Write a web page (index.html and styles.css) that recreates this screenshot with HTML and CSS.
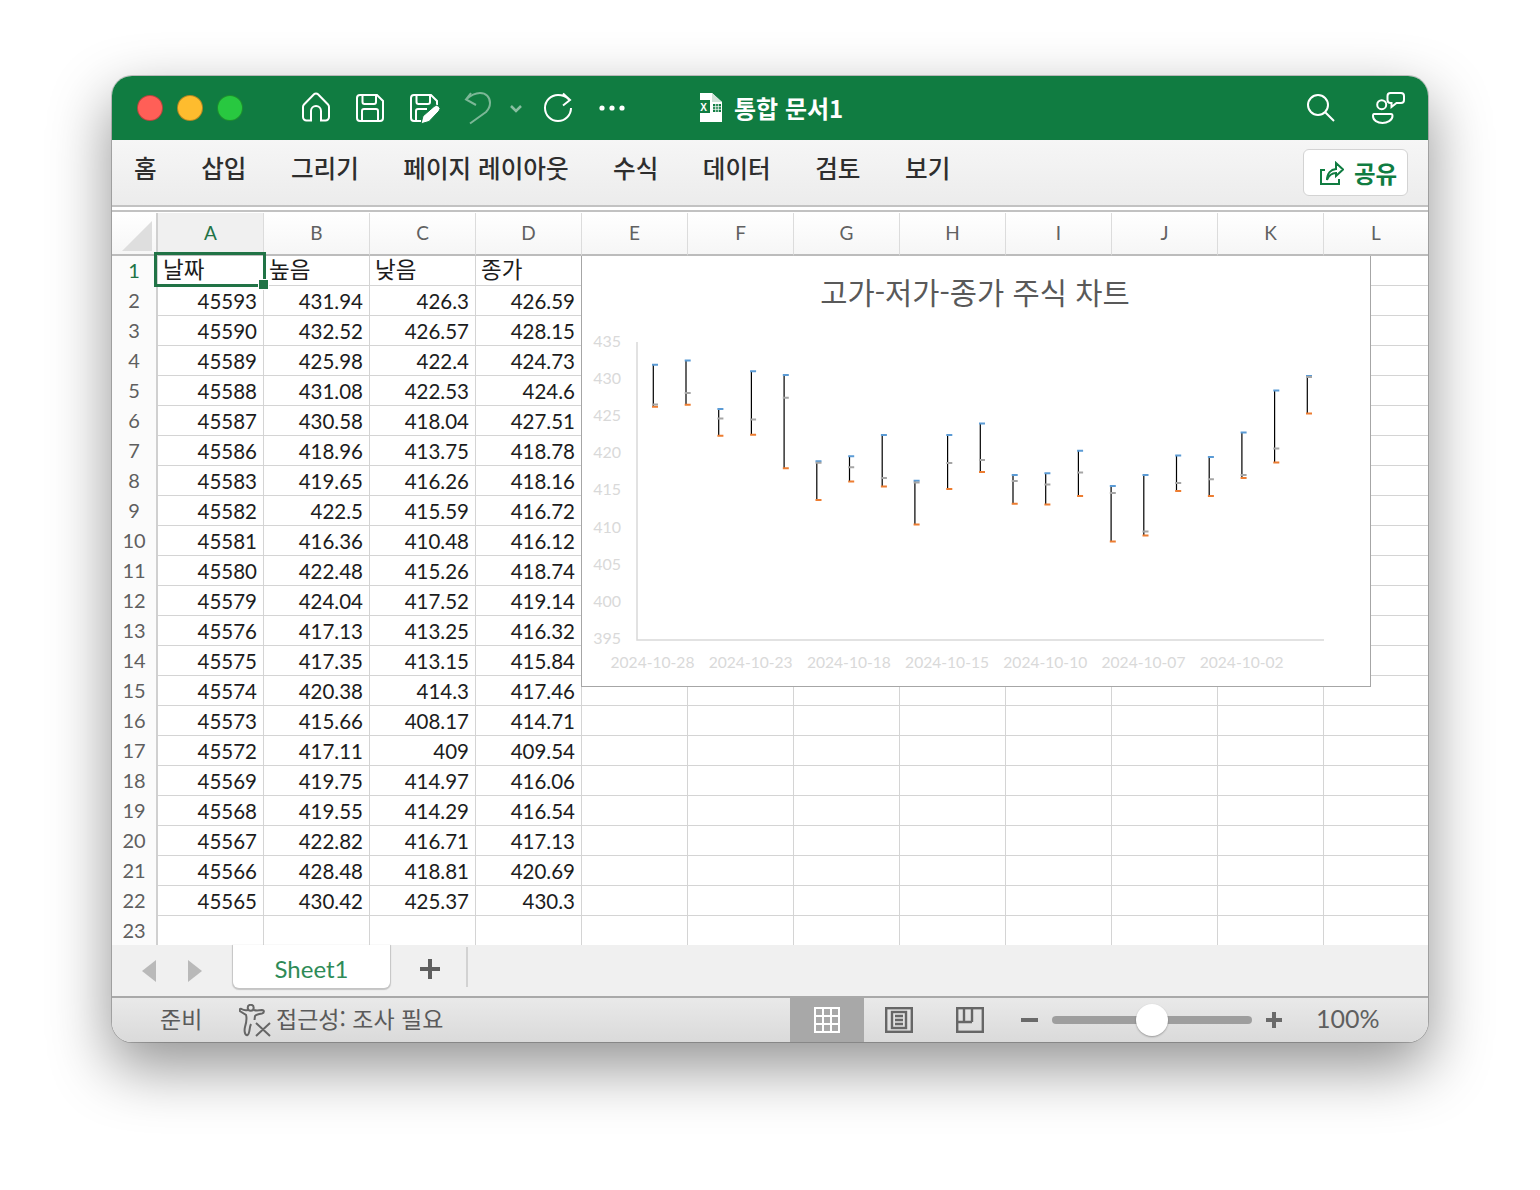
FILE: index.html
```html
<!DOCTYPE html>
<html lang="ko">
<head>
<meta charset="utf-8">
<title>통합 문서1</title>
<link rel="stylesheet" href="styles.css">
</head>
<body>
<main class="window">
  <header class="titlebar">
    <div class="lights"><span class="light red"></span><span class="light yellow"></span><span class="light green"></span></div>
    <div class="quick">
      <svg class="qi home" viewBox="0 0 28 30"><path d="M12 2.300 a2.800 2.800 0 0 1 4 0 L26 12.500 a3.500 3.500 0 0 1 1 2.500 V25 a3.500 3.500 0 0 1 -3.500 3.500 H19 V19 a5 5 0 0 0 -10 0 V28.500 H4.500 a3.500 3.500 0 0 1 -3.500 -3.500 V15 a3.500 3.500 0 0 1 1 -2.500 Z"/></svg>
      <svg class="qi save" viewBox="0 0 28 28"><path d="M4 1 H21 L27 7 V24 a3 3 0 0 1 -3 3 H4 a3 3 0 0 1 -3 -3 V4 a3 3 0 0 1 3 -3 Z M6.500 1 V8 a2 2 0 0 0 2 2 H18 a2 2 0 0 0 2 -2 V1 M6 27 V17 a2 2 0 0 1 2 -2 H20 a2 2 0 0 1 2 2 V27"/></svg>
      <svg class="qi saveas" viewBox="0 0 30 30"><path d="M11 27 H4 a3 3 0 0 1 -3 -3 V4 a3 3 0 0 1 3 -3 H21 L27 7 V11 M6.500 1 V8 a2 2 0 0 0 2 2 H18 a2 2 0 0 0 2 -2 V1 M6 27 V17 a2 2 0 0 1 2 -2 H17"/><path class="solid" d="M11 29.800 L13 22 L24 12.500 a3.300 3.300 0 0 1 5 4.500 L19 27.500 Z"/></svg>
      <svg class="qi undo" viewBox="0 0 26 32"><path d="M6 1 L1 7.500 L11 13 M1 7.500 C6 3 11 1 15 1 C21 1 25 5 25 11 C25 15 23 18 21 20 L5 31.500"/></svg>
      <svg class="qi chevron" viewBox="0 0 12 7"><path d="M1 1 L6 6 L11 1"/></svg>
      <svg class="qi redo" viewBox="0 0 30 30"><path d="M19 1.500 L26 8 L19 13.500 M25 7.500 C22 4.500 18 3 14 3 A13 13 0 1 0 27 16"/></svg>
      <svg class="qi dots" viewBox="0 0 26 6"><circle cx="3" cy="3" r="2.600"/><circle cx="13" cy="3" r="2.600"/><circle cx="23" cy="3" r="2.600"/></svg>
    </div>
    <div class="doc">
      <svg class="docicon" viewBox="0 0 25 30"><path class="docfill" d="M3 0 H15 L25 9 V29 H3 Z"/><path class="docfold" d="M15 0 L25 9 H15 Z"/><rect class="docbox" x="0" y="7" width="13" height="13"/><text class="docx" x="6.500" y="17.500">X</text><path class="docgrid" d="M16 11 H24 V19 H16 Z"/><path class="docgridline" d="M16 13.700 H24 M16 16.300 H24 M18.700 11 V19 M21.300 11 V19"/></svg>
      <span class="docname">통합 문서1</span>
    </div>
    <div class="right">
      <svg class="ri search" viewBox="0 0 28 28"><circle cx="11" cy="11" r="10"/><path d="M18.200 18.200 L27 27"/></svg>
      <svg class="ri people" viewBox="0 0 33 32"><circle cx="9.700" cy="12.700" r="4.500"/><path d="M2 22 H19 C20 22 20.500 22.500 20.500 24 C20.500 28.500 15 31 10.500 31 C5.500 31 1 28.500 1 24 C1 22.500 1 22 2 22 Z"/><path d="M18.500 1 H29 a3 3 0 0 1 3 3 V8 a3 3 0 0 1 -3 3 H24.500 L19.500 15 V11 H18.500 a3 3 0 0 1 -3 -3 V4 a3 3 0 0 1 3 -3 Z"/></svg>
    </div>
  </header>

  <nav class="ribbon">
    <span class="tab">홈</span><span class="tab">삽입</span><span class="tab">그리기</span><span class="tab">페이지 레이아웃</span><span class="tab">수식</span><span class="tab">데이터</span><span class="tab">검토</span><span class="tab">보기</span>
    <button class="share" type="button">
      <svg class="shareicon" viewBox="0 0 24 24"><path d="M5 9 H1 V23 H19 V18 M7 19 C7 12 11 8.500 16 8 V2 L23 8.500 L16 15 V12 C12 12 9 14 7 19 Z"/></svg>
      <span>공유</span>
    </button>
  </nav>

  <section class="sheet">
    <table class="grid">
      <thead>
        <tr><th class="corner"><span class="tri"></span></th><th class="col on">A</th><th class="col">B</th><th class="col">C</th><th class="col">D</th><th class="col">E</th><th class="col">F</th><th class="col">G</th><th class="col">H</th><th class="col">I</th><th class="col">J</th><th class="col">K</th><th class="col last">L</th></tr>
      </thead>
      <tbody>
        <tr><th class="on">1</th><td class="ko">날짜</td><td class="ko">높음</td><td class="ko">낮음</td><td class="ko">종가</td><td></td><td></td><td></td><td></td><td></td><td></td><td></td><td></td></tr>
        <tr><th>2</th><td>45593</td><td>431.94</td><td>426.3</td><td>426.59</td><td></td><td></td><td></td><td></td><td></td><td></td><td></td><td></td></tr>
        <tr><th>3</th><td>45590</td><td>432.52</td><td>426.57</td><td>428.15</td><td></td><td></td><td></td><td></td><td></td><td></td><td></td><td></td></tr>
        <tr><th>4</th><td>45589</td><td>425.98</td><td>422.4</td><td>424.73</td><td></td><td></td><td></td><td></td><td></td><td></td><td></td><td></td></tr>
        <tr><th>5</th><td>45588</td><td>431.08</td><td>422.53</td><td>424.6</td><td></td><td></td><td></td><td></td><td></td><td></td><td></td><td></td></tr>
        <tr><th>6</th><td>45587</td><td>430.58</td><td>418.04</td><td>427.51</td><td></td><td></td><td></td><td></td><td></td><td></td><td></td><td></td></tr>
        <tr><th>7</th><td>45586</td><td>418.96</td><td>413.75</td><td>418.78</td><td></td><td></td><td></td><td></td><td></td><td></td><td></td><td></td></tr>
        <tr><th>8</th><td>45583</td><td>419.65</td><td>416.26</td><td>418.16</td><td></td><td></td><td></td><td></td><td></td><td></td><td></td><td></td></tr>
        <tr><th>9</th><td>45582</td><td>422.5</td><td>415.59</td><td>416.72</td><td></td><td></td><td></td><td></td><td></td><td></td><td></td><td></td></tr>
        <tr><th>10</th><td>45581</td><td>416.36</td><td>410.48</td><td>416.12</td><td></td><td></td><td></td><td></td><td></td><td></td><td></td><td></td></tr>
        <tr><th>11</th><td>45580</td><td>422.48</td><td>415.26</td><td>418.74</td><td></td><td></td><td></td><td></td><td></td><td></td><td></td><td></td></tr>
        <tr><th>12</th><td>45579</td><td>424.04</td><td>417.52</td><td>419.14</td><td></td><td></td><td></td><td></td><td></td><td></td><td></td><td></td></tr>
        <tr><th>13</th><td>45576</td><td>417.13</td><td>413.25</td><td>416.32</td><td></td><td></td><td></td><td></td><td></td><td></td><td></td><td></td></tr>
        <tr><th>14</th><td>45575</td><td>417.35</td><td>413.15</td><td>415.84</td><td></td><td></td><td></td><td></td><td></td><td></td><td></td><td></td></tr>
        <tr><th>15</th><td>45574</td><td>420.38</td><td>414.3</td><td>417.46</td><td></td><td></td><td></td><td></td><td></td><td></td><td></td><td></td></tr>
        <tr><th>16</th><td>45573</td><td>415.66</td><td>408.17</td><td>414.71</td><td></td><td></td><td></td><td></td><td></td><td></td><td></td><td></td></tr>
        <tr><th>17</th><td>45572</td><td>417.11</td><td>409</td><td>409.54</td><td></td><td></td><td></td><td></td><td></td><td></td><td></td><td></td></tr>
        <tr><th>18</th><td>45569</td><td>419.75</td><td>414.97</td><td>416.06</td><td></td><td></td><td></td><td></td><td></td><td></td><td></td><td></td></tr>
        <tr><th>19</th><td>45568</td><td>419.55</td><td>414.29</td><td>416.54</td><td></td><td></td><td></td><td></td><td></td><td></td><td></td><td></td></tr>
        <tr><th>20</th><td>45567</td><td>422.82</td><td>416.71</td><td>417.13</td><td></td><td></td><td></td><td></td><td></td><td></td><td></td><td></td></tr>
        <tr><th>21</th><td>45566</td><td>428.48</td><td>418.81</td><td>420.69</td><td></td><td></td><td></td><td></td><td></td><td></td><td></td><td></td></tr>
        <tr><th>22</th><td>45565</td><td>430.42</td><td>425.37</td><td>430.3</td><td></td><td></td><td></td><td></td><td></td><td></td><td></td><td></td></tr>
        <tr><th>23</th><td></td><td></td><td></td><td></td><td></td><td></td><td></td><td></td><td></td><td></td><td></td><td></td></tr>
      </tbody>
    </table>
    <div class="selection"><span class="handle"></span></div>
    <figure class="chart">
      <svg class="chartsvg" viewBox="1 1 788 430">
        <text class="ctitle" x="394" y="49">고가-저가-종가 주식 차트</text>
        <g class="ylab">
          <text x="40" y="92">435</text><text x="40" y="129">430</text><text x="40" y="166">425</text><text x="40" y="203">420</text><text x="40" y="240">415</text><text x="40" y="278">410</text><text x="40" y="315">405</text><text x="40" y="352">400</text><text x="40" y="389">395</text>
        </g>
        <path class="axis" d="M56 87 V385 H743"/>
        <g class="xlab">
          <text x="71.500" y="413">2024-10-28</text><text x="169.700" y="413">2024-10-23</text><text x="267.900" y="413">2024-10-18</text><text x="366.100" y="413">2024-10-15</text><text x="464.300" y="413">2024-10-10</text><text x="562.500" y="413">2024-10-07</text><text x="660.700" y="413">2024-10-02</text>
        </g>
        <path class="hl" d="M72.300 109.800V151.700M105 105.500V149.700M137.700 154.100V180.700M170.400 116.200V179.800M203.100 119.900V213.200M235.800 206.300V245.100M268.500 201.200V226.400M301.200 180V231.400M333.900 225.700V269.400M366.600 180.100V233.900M399.300 168.500V217.100M432 220V248.800M464.700 218.300V249.600M497.400 195.800V241M530.100 230.900V286.600M562.800 220.100V280.400M595.500 200.500V236M628.200 201.900V241.100M660.900 177.600V223.100M693.600 135.500V207.500M726.300 121.100V158.600"/>
        <path class="high" d="M71 109.800h6M103.700 105.500h6M136.400 154.100h6M169.100 116.200h6M201.800 119.900h6M234.500 206.300h6M267.200 201.200h6M299.900 180h6M332.600 225.700h6M365.300 180.100h6M398 168.500h6M430.700 220h6M463.400 218.300h6M496.100 195.800h6M528.800 230.900h6M561.500 220.100h6M594.200 200.500h6M626.900 201.900h6M659.600 177.600h6M692.300 135.500h6M725 121.100h6"/>
        <path class="low" d="M71 151.700h6M103.700 149.700h6M136.400 180.700h6M169.100 179.800h6M201.800 213.200h6M234.500 245.100h6M267.200 226.400h6M299.900 231.400h6M332.600 269.400h6M365.300 233.900h6M398 217.100h6M430.700 248.800h6M463.400 249.600h6M496.100 241h6M528.800 286.600h6M561.500 280.400h6M594.200 236h6M626.900 241.100h6M659.600 223.100h6M692.300 207.500h6M725 158.600h6"/>
        <path class="close" d="M71 149.600h6M103.700 138h6M136.400 163.400h6M169.100 164.400h6M201.800 142.700h6M234.500 207.700h6M267.200 212.300h6M299.900 223h6M332.600 227.500h6M365.300 208h6M398 205h6M430.700 226h6M463.400 229.600h6M496.100 217.500h6M528.800 238h6M561.500 276.400h6M594.200 227.900h6M626.900 224.300h6M659.600 220h6M692.300 193.500h6M725 122h6"/>
      </svg>
    </figure>
  </section>

  <div class="tabbar">
    <div class="arrows"><span class="arrow left"></span><span class="arrow right"></span></div>
    <div class="sheettab">Sheet1</div>
    <svg class="plus" viewBox="0 0 22 22"><path d="M11 1 V21 M1 11 H21"/></svg>
    <span class="tabsep"></span>
  </div>

  <footer class="status">
    <span class="ready">준비</span>
    <svg class="a11y" viewBox="0 0 32 33"><circle cx="11.700" cy="3.800" r="3"/><path d="M9 6 C6 6.800 4 6 2.500 5 C0.500 4 0 6.500 1.500 7.500 L7 11 C8 14 7.500 18 6 23 C5 27 6 32 8.500 31 C11 30 10 24 12 20 M14.500 6 C17 6.800 20 6.500 23 6 C25.500 6 25.500 9 23 9.500 C20 10 17 10.500 16 12 L15.500 16 M17 19 L31 32 M31 19 L17 32"/></svg>
    <span class="a11ytext">접근성: 조사 필요</span>
    <span class="viewbtn active">
      <svg class="vi gridview" viewBox="0 0 26 26"><rect x="1" y="1" width="24" height="24"/><path d="M9 1 V25 M17 1 V25 M1 9 H25 M1 17 H25"/></svg>
    </span>
    <span class="viewbtn normal">
      <svg class="vi" viewBox="0 0 28 26"><rect x="1.200" y="1.200" width="25.600" height="23.600"/><rect x="7" y="5" width="14" height="16"/><path d="M10 9 H18 M10 13 H18 M10 17 H18"/></svg>
    </span>
    <span class="viewbtn">
      <svg class="vi" viewBox="0 0 28 26"><rect x="1.200" y="1.200" width="25.600" height="23.600"/><path d="M8 1 V15 M16 1 V15 M1 15 H16"/></svg>
    </span>
    <span class="zoomminus"></span>
    <span class="slider"><span class="thumb"></span></span>
    <svg class="zoomplus" viewBox="0 0 16 16"><path d="M8 0 V16 M0 8 H16"/></svg>
    <span class="zoomval">100%</span>
  </footer>
</main>
</body>
</html>
```

FILE: styles.css
```css
* { box-sizing: border-box; }
html, body { margin: 0; padding: 0; background: #fff; }
body {
  width: 1540px;
  height: 1190px;
  overflow: hidden;
  font-family: "Noto Sans CJK KR", sans-serif;
}
.window {
  width: 1316px;
  height: 966px;
  margin: 76px 0 0 112px;
  border-radius: 20px;
  overflow: hidden;
  background: #fff;
  display: flex;
  flex-direction: column;
  box-shadow: 0 0 0 1px rgba(0,0,0,.2), 0 24px 60px 2px rgba(0,0,0,.42);
}

/* title bar */
.titlebar {
  height: 64px;
  flex: none;
  background: #107c41;
  display: flex;
  align-items: center;
  color: #fff;
  padding-left: 25px;
}
.lights { display: flex; gap: 14px; width: 164px; flex: none; }
.light { width: 26px; height: 26px; border-radius: 50%; border: 1px solid rgba(0,0,0,.28); }
.red { background: #ff5f57; }
.yellow { background: #febc2e; }
.green { background: #28c840; }
.quick { display: flex; align-items: center; width: 396px; flex: none; height: 40px; padding-left: 1px; }
.qi { fill: none; stroke: #fff; stroke-width: 2; flex: none; overflow: visible; }
.home { width: 28px; height: 30px; margin: -2px 26px 0 0; }
.save { width: 28px; height: 28px; margin-right: 26px; }
.saveas { width: 30px; height: 30px; margin: 2px 25px 0 0; }
.solid { fill: #fff; stroke: #107c41; stroke-width: 1; }
.undo { width: 26px; height: 32px; margin-right: 19px; opacity: .45; }
.chevron { width: 12px; height: 7px; margin-right: 22px; opacity: .5; stroke-width: 2.500; }
.redo { width: 30px; height: 30px; margin: -2px 25px 0 0; }
.dots { width: 26px; height: 6px; fill: #fff; stroke: none; }
.doc { display: flex; align-items: center; gap: 12px; flex: none; width: 610px; }
.docicon { width: 25px; height: 30px; flex: none; }
.docfill { fill: #fff; }
.docfold { fill: #cfe3d7; }
.docbox { fill: #107c41; }
.docx { fill: #fff; font: 700 10px "Liberation Sans", sans-serif; text-anchor: middle; }
.docgrid { fill: #107c41; }
.docgridline { fill: none; stroke: #fff; stroke-width: .8; }
.docname { font-size: 24px; font-weight: 700; line-height: 32px; }
.right { display: flex; align-items: center; gap: 37px; }
.ri { fill: none; stroke: #fff; stroke-width: 2; overflow: visible; flex: none; }
.search { width: 28px; height: 28px; }
.people { width: 33px; height: 32px; }

/* ribbon */
.ribbon {
  height: 65px;
  flex: none;
  display: flex;
  align-items: center;
  gap: 44.500px;
  padding: 0 20px 12px 22px;
  background: linear-gradient(#f6f6f6, #ececec);
  color: #2e2e2e;
  position: relative;
}
.tab { font-size: 24.600px; font-weight: 500; line-height: 36px; white-space: nowrap; }
.share {
  margin-left: auto;
  margin-top: 12px;
  width: 105px;
  height: 47px;
  flex: none;
  border: 1px solid #d3d3d3;
  border-radius: 6px;
  background: #fff;
  display: flex;
  align-items: center;
  gap: 10px;
  padding: 0 0 0 16px;
  color: #107c41;
  font: 700 23.500px/30px "Noto Sans CJK KR", sans-serif;
}
.shareicon { width: 24px; height: 24px; fill: none; stroke: #107c41; stroke-width: 2; flex: none; }

/* sheet */
.sheet {
  height: 740px;
  flex: none;
  position: relative;
  overflow: hidden;
  background: #fff;
  border-top: 2px solid #c2c2c2;
  padding-top: 6px;
}
.sheet::before {
  content: "";
  position: absolute;
  left: 0; right: 0; top: 3px;
  height: 2px;
  background: #c2c2c2;
}
.grid {
  border-collapse: separate;
  border-spacing: 0;
  table-layout: fixed;
  width: 1316px;
  font-family: Lato, "Noto Sans CJK KR", sans-serif;
}
.grid thead th {
  height: 43px;
  padding: 0 0 2px;
  font-weight: 400;
  font-size: 19px;
  color: #616161;
  background: linear-gradient(#fff, #f6f6f6);
  border-right: 1px solid #dcdcdc;
  border-bottom: 2px solid #bcbcbc;
}
.grid thead th.corner { width: 46px; position: relative; border-right: 2px solid #d0d0d0; }
.grid thead th.col { width: 106px; }
.grid thead th.last { width: 104px; border-right: 0; }
.grid thead th.on { color: #217346; background: #f0f0f0; }
.tri {
  position: absolute;
  left: 10px; top: 8px;
  width: 30px; height: 30px;
  background: #dedede;
  clip-path: polygon(100% 0, 100% 100%, 0 100%);
}
.grid tbody th {
  height: 30px;
  padding: 0 0 2px;
  font-weight: 400;
  font-size: 20px;
  color: #5f5f5f;
  background: #fbfbfb;
  border-right: 2px solid #d0d0d0;
  text-align: center;
}
.grid tbody th.on { color: #217346; }
.grid td {
  height: 30px;
  padding: 0 6px 0 0;
  font-size: 20.500px;
  line-height: 28px;
  color: #1c1c1c;
  text-align: right;
  border-right: 1px solid #d4d4d4;
  border-bottom: 1px solid #d4d4d4;
  white-space: nowrap;
}
.grid td:last-child { border-right: 0; }
.grid td.ko {
  text-align: left;
  padding: 0 0 6px 5px;
  font-size: 22.500px;
  line-height: 22px;
  font-family: "Noto Sans CJK KR", sans-serif;
}
.selection {
  position: absolute;
  left: 42px; top: 45px;
  width: 112px; height: 35px;
  border: 3px solid #217346;
}
.handle {
  position: absolute;
  right: -6px; bottom: -6px;
  width: 11px; height: 11px;
  background: #217346;
  border: 1px solid #fff;
}
.chart {
  position: absolute;
  left: 469px; top: 49px;
  width: 790px; height: 431px;
  margin: 0;
  background: #fff;
  border: 1px solid #a6a6a6;
  border-top: 0;
}
.chartsvg { display: block; width: 788px; height: 430px; }
.ctitle { font: 400 29.600px "Noto Sans CJK KR", sans-serif; fill: #595959; text-anchor: middle; }
.ylab text { font: 400 16px Lato, sans-serif; fill: #d9d9d9; text-anchor: end; }
.xlab text { font: 400 15.600px Lato, sans-serif; fill: #d9d9d9; text-anchor: middle; }
.axis { fill: none; stroke: #d9d9d9; stroke-width: 1.500; }
.hl { fill: none; stroke: #000; stroke-width: 1.200; }
.high { fill: none; stroke: #5b9bd5; stroke-width: 2; }
.low { fill: none; stroke: #ed7d31; stroke-width: 2; }
.close { fill: none; stroke: #a5a5a5; stroke-width: 2; }

/* tab bar */
.tabbar {
  height: 51px;
  flex: none;
  display: flex;
  align-items: flex-start;
  background: #f0f0f0;
  position: relative;
}
.arrows { display: flex; gap: 32px; width: 121px; padding: 15px 0 0 30px; flex: none; }
.arrow { width: 0; height: 0; border-top: 11px solid transparent; border-bottom: 11px solid transparent; }
.arrow.left { border-right: 14px solid #b9b9b9; }
.arrow.right { border-left: 14px solid #b9b9b9; }
.sheettab {
  width: 157px;
  height: 43px;
  flex: none;
  background: #fff;
  border-radius: 0 0 6px 6px;
  box-shadow: 0 1px 1px 1px #c4c4c4;
  text-align: center;
  font: 400 24px/48px Lato, sans-serif;
  color: #2e8b57;
}
.plus { width: 22px; height: 22px; margin: 13px 0 0 29px; fill: none; stroke: #5f5f5f; stroke-width: 4; flex: none; }
.tabsep { width: 2px; height: 40px; margin: 2px 0 0 25px; background: #d2d2d2; flex: none; }

/* status bar */
.status {
  flex: 1;
  display: flex;
  align-items: center;
  background: linear-gradient(#e9e9e9, #dadada);
  border-top: 2px solid #a9a9a9;
  color: #5a5a5a;
  font-size: 23px;
  padding-left: 48px;
}
.ready { line-height: 30px; width: 79px; flex: none; padding-bottom: 4px; height: 34px; }
.a11y { width: 32px; height: 33px; fill: none; stroke: #666; stroke-width: 2; flex: none; margin-right: 5px; }
.a11ytext { width: 514px; flex: none; line-height: 30px; height: 34px; padding-bottom: 4px; }
.viewbtn { width: 72px; align-self: stretch; display: flex; align-items: center; justify-content: center; flex: none; }
.viewbtn.active { width: 74px; background: #a8a8a8; }
.viewbtn.normal { width: 70px; }
.vi { width: 28px; height: 26px; fill: none; stroke: #666; stroke-width: 2.400; }
.gridview { width: 26px; height: 26px; stroke: #fff; stroke-width: 2; }
.zoomminus { width: 17px; height: 4px; margin-left: 15px; background: #6a6a6a; flex: none; }
.slider { width: 200px; height: 8px; border-radius: 4px; background: #9e9e9e; margin-left: 14px; position: relative; flex: none; }
.thumb { position: absolute; left: 84px; top: -12px; width: 32px; height: 32px; border-radius: 50%; background: #fff; box-shadow: 0 1px 2px rgba(0,0,0,.3); }
.zoomplus { width: 16px; height: 16px; margin-left: 14px; fill: none; stroke: #6a6a6a; stroke-width: 4; flex: none; }
.zoomval { font: 400 25px/30px Lato, sans-serif; color: #5f5f5f; margin-left: 34px; height: 34px; padding-bottom: 4px; }
```
